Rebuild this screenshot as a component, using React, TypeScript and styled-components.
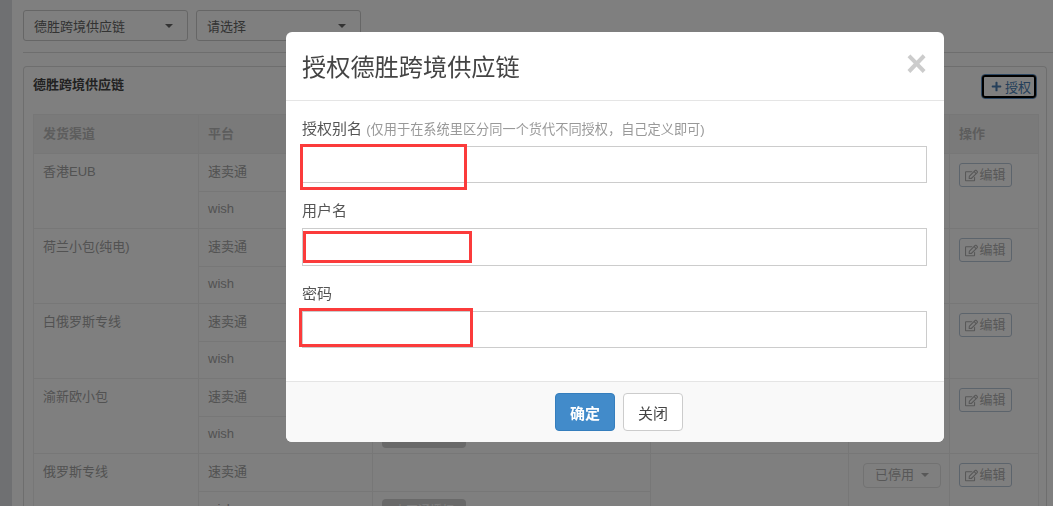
import { Fragment } from "react";
import styled, { createGlobalStyle } from "styled-components";
import { FaPlus, FaRegEdit } from "react-icons/fa";

const GlobalStyle = createGlobalStyle`
  html, body {
    margin: 0;
    height: 100%;
    overflow: hidden;
    background: #fff;
  }
  body, button, input {
    font-family: "Liberation Sans", "Noto Sans CJK SC", sans-serif;
  }
`;

const Page = styled.div`
  display: flex;
  width: 1053px;
  height: 506px;
  overflow: hidden;
`;

const Sidebar = styled.div`
  flex: 0 0 12px;
  background: #dfe1e5;
`;

const Main = styled.div`
  flex: 1;
  padding: 10px 6px 0 11px;
  min-width: 0;
`;

const Toolbar = styled.div`
  display: flex;
  gap: 8px;
  padding-bottom: 11px;
  border-bottom: 1px solid #ddd;
  margin-right: -6px;
`;

const Select = styled.div`
  width: 165px;
  height: 31px;
  box-sizing: border-box;
  border: 1px solid #ccc;
  border-radius: 3px;
  padding: 0 14px 0 10px;
  display: flex;
  align-items: center;
  justify-content: space-between;
  font-size: 13px;
  color: #666;
`;

const Caret = styled.span<{ $size?: number }>`
  width: 0;
  height: 0;
  border-left: ${(p) => p.$size ?? 4}px solid transparent;
  border-right: ${(p) => p.$size ?? 4}px solid transparent;
  border-top: ${(p) => p.$size ?? 4}px solid currentColor;
`;

const Panel = styled.div`
  margin-top: 13px;
  border: 1px solid #ddd;
  border-radius: 4px;
  border-bottom: 0;
  padding: 7px 9px 0;
`;

const PanelHead = styled.div`
  display: flex;
  align-items: center;
  justify-content: space-between;
  height: 25px;
  margin-bottom: 15px;
`;

const PanelTitle = styled.div`
  padding-bottom: 6px;
  font-size: 13px;
  font-weight: bold;
  color: #444;
`;

const AuthButton = styled.button`
  width: 56px;
  height: 25px;
  padding: 0 0 0 4px;
  display: flex;
  align-items: center;
  justify-content: center;
  gap: 3px;
  font-size: 13px;
  color: #4a7fb5;
  background: #fff;
  border: 1px solid #5b8fc4;
  border-radius: 4px;
  outline: 2px solid #000;
  outline-offset: -3px;
  svg {
    width: 11px;
    height: 11px;
  }
`;

const Table = styled.table`
  width: 1005px;
  border-collapse: collapse;
  table-layout: fixed;
  font-size: 13px;
  color: #a5a5a5;
`;

const Th = styled.th<{ $width: number }>`
  width: ${(p) => p.$width}px;
  height: 39px;
  box-sizing: border-box;
  padding: 0 9px 3px;
  background: #f5f5f5;
  border: 1px solid #eee;
  text-align: left;
  font-weight: bold;
  color: #bbb;
`;

const Td = styled.td<{ $plain?: boolean }>`
  height: 37.5px;
  box-sizing: border-box;
  padding: 7.5px 9px 0;
  vertical-align: top;
  line-height: 20px;
  border: 1px solid #eee;
  ${(p) => p.$plain && "border-left: 0;"}
`;

const Badge = styled.span`
  display: flex;
  align-items: center;
  justify-content: center;
  width: 84px;
  height: 24px;
  border-radius: 4px;
  background: #d2d2d2;
  color: #fff;
  font-size: 12px;
`;

const StatusButton = styled.span`
  display: flex;
  align-items: center;
  justify-content: center;
  gap: 7px;
  width: 78px;
  height: 25px;
  margin: 1px 0 0 5px;
  box-sizing: border-box;
  border: 1px solid #e4e4e4;
  border-radius: 4px;
  color: #b0b0b0;
  font-size: 13px;
`;

const EditButton = styled.span`
  display: flex;
  align-items: center;
  justify-content: center;
  gap: 1px;
  width: 53px;
  height: 24px;
  margin: 1.5px 0 0;
  box-sizing: border-box;
  border: 1px solid #b9c8d8;
  border-radius: 3px;
  color: #b0b0b0;
  font-size: 13px;
  svg {
    width: 13px;
    height: 13px;
  }
`;

const Overlay = styled.div`
  position: fixed;
  inset: 0;
  background: rgba(0, 0, 0, 0.5);
  display: flex;
  justify-content: flex-start;
  align-items: flex-start;
  padding: 32px 0 0 286px;
  box-sizing: border-box;
`;

const Modal = styled.div`
  width: 658px;
  height: 410px;
  box-sizing: border-box;
  background: #fff;
  border-radius: 6px;
  overflow: hidden;
  display: flex;
  flex-direction: column;
`;

const ModalHead = styled.div`
  height: 69px;
  flex: none;
  box-sizing: border-box;
  border-bottom: 1px solid #e5e5e5;
  padding: 0 16px;
  display: flex;
  align-items: center;
  justify-content: space-between;
`;

const ModalTitle = styled.h4`
  margin: -2px 0 0;
  font-size: 24.2px;
  font-weight: normal;
  color: #444;
`;

const Close = styled.span`
  font-size: 36px;
  line-height: 1;
  font-weight: bold;
  color: #ccc;
  margin: -4px 1px 0 0;
`;

const ModalBody = styled.div`
  flex: 1;
  padding: 19.75px 17px 0 16px;
`;

const Field = styled.div`
  position: relative;
  margin-bottom: 20px;
`;

const Label = styled.div`
  height: 20px;
  margin-bottom: 5px;
  line-height: 16px;
  font-size: 15px;
  color: #555;
`;

const Hint = styled.small`
  font-size: 13.2px;
  color: #999;
`;

const Input = styled.input`
  display: block;
  width: 100%;
  height: 37.5px;
  box-sizing: border-box;
  border: 1px solid #ccc;
  border-radius: 0;
  background: #fff;
  outline: none;
`;

const RedMark = styled.div<{ $left: number; $top: number; $width: number; $height: number }>`
  position: absolute;
  left: ${(p) => p.$left}px;
  top: ${(p) => p.$top}px;
  width: ${(p) => p.$width}px;
  height: ${(p) => p.$height}px;
  box-sizing: border-box;
  border: 3px solid #fb3b3b;
`;

const ModalFoot = styled.div`
  flex: none;
  height: 61px;
  box-sizing: border-box;
  border-top: 1px solid #e5e5e5;
  background: #f9f9f9;
  padding-left: 8px;
  display: flex;
  align-items: center;
  justify-content: center;
  gap: 8px;
`;

const FootButton = styled.button<{ $primary?: boolean }>`
  width: 60px;
  height: 38px;
  padding: 0;
  border-radius: 4px;
  font-size: 15px;
  font-weight: ${(p) => (p.$primary ? "bold" : "normal")};
  color: ${(p) => (p.$primary ? "#fff" : "#444")};
  background: ${(p) => (p.$primary ? "#428bca" : "#fff")};
  border: 1px solid ${(p) => (p.$primary ? "#357ebd" : "#ccc")};
`;

const channels = ["香港EUB", "荷兰小包(纯电)", "白俄罗斯专线", "渝新欧小包", "俄罗斯专线"];

const fields = [
  { label: "授权别名", hint: "(仅用于在系统里区分同一个货代不同授权，自己定义即可)", mark: [-2, 23.25, 167, 46] },
  { label: "用户名", mark: [1, 27.75, 169, 32] },
  { label: "密码", mark: [-3, 22.25, 174, 39] },
];

export default function App() {
  return (
    <>
      <GlobalStyle />
      <Page>
        <Sidebar />
        <Main>
          <Toolbar>
            <Select>
              德胜跨境供应链
              <Caret />
            </Select>
            <Select>
              请选择
              <Caret />
            </Select>
          </Toolbar>
          <Panel>
            <PanelHead>
              <PanelTitle>德胜跨境供应链</PanelTitle>
              <AuthButton>
                <FaPlus />
                授权
              </AuthButton>
            </PanelHead>
            <Table>
              <thead>
                <tr>
                  <Th $width={165}>发货渠道</Th>
                  <Th $width={174}>平台</Th>
                  <Th $width={278} />
                  <Th $width={198} />
                  <Th $width={101} />
                  <Th $width={89}>操作</Th>
                </tr>
              </thead>
              <tbody>
                {channels.map((name, i) => (
                  <Fragment key={name}>
                    <tr>
                      <Td rowSpan={2}>{name}</Td>
                      <Td>速卖通</Td>
                      <Td $plain />
                      <Td rowSpan={2} />
                      <Td rowSpan={2}>
                        {i === 4 && (
                          <StatusButton>
                            已停用
                            <Caret />
                          </StatusButton>
                        )}
                      </Td>
                      <Td rowSpan={2}>
                        <EditButton>
                          <FaRegEdit />
                          编辑
                        </EditButton>
                      </Td>
                    </tr>
                    <tr>
                      <Td>wish</Td>
                      <Td $plain>
                        <Badge>未开通授权</Badge>
                      </Td>
                    </tr>
                  </Fragment>
                ))}
              </tbody>
            </Table>
          </Panel>
        </Main>
      </Page>
      <Overlay>
        <Modal>
          <ModalHead>
            <ModalTitle>授权德胜跨境供应链</ModalTitle>
            <Close>×</Close>
          </ModalHead>
          <ModalBody>
            {fields.map((f) => (
              <Field key={f.label}>
                <Label>
                  {f.label} {f.hint && <Hint>{f.hint}</Hint>}
                </Label>
                <Input />
                <RedMark $left={f.mark[0]} $top={f.mark[1]} $width={f.mark[2]} $height={f.mark[3]} />
              </Field>
            ))}
          </ModalBody>
          <ModalFoot>
            <FootButton $primary>确定</FootButton>
            <FootButton>关闭</FootButton>
          </ModalFoot>
        </Modal>
      </Overlay>
    </>
  );
}
